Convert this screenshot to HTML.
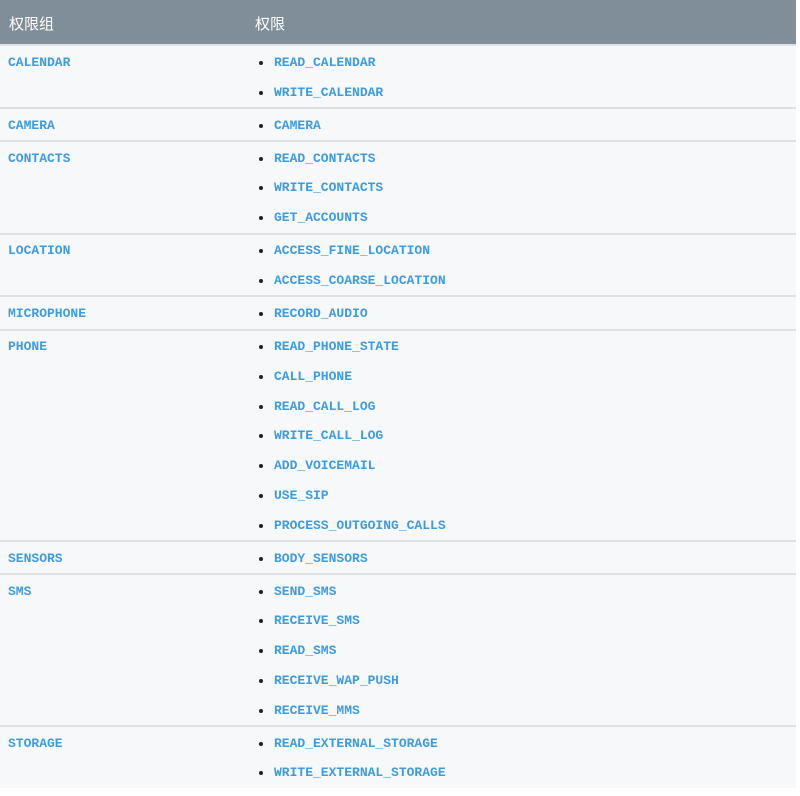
<!DOCTYPE html>
<html><head><meta charset="utf-8"><style>
body{margin:0;background:#fff;width:800px;height:796px;overflow:hidden}
.t{position:absolute;left:0;top:0;width:796px;background:#f7f8fa}
.h{height:44.3px;background:#7f8e99;color:#fff;font:15px "Liberation Sans","Noto Sans CJK SC",sans-serif;position:relative}
.h span{position:absolute;top:13px}
.r{border-top:2px solid #dfe2e5;position:relative;padding-bottom:1.3px}
.g{position:absolute;left:8px;top:8.5px}
.g,.i{font:bold 13px "Liberation Mono",monospace;color:#3d9be0;line-height:29.75px}
.g{line-height:16px}
.l{margin-left:274px;position:relative;top:1.5px}
.i{position:relative;height:29.75px}
.i:before{content:"";position:absolute;left:-15px;top:13px;width:4px;height:4px;border-radius:2px;background:#222}
</style></head><body><div class="t">
<div class="h"><span style="left:9px">权限组</span><span style="left:255px">权限</span></div>
<div class="r"><div class="g">CALENDAR</div><div class="l"><div class="i">READ_CALENDAR</div><div class="i">WRITE_CALENDAR</div></div></div>
<div class="r"><div class="g">CAMERA</div><div class="l"><div class="i">CAMERA</div></div></div>
<div class="r"><div class="g">CONTACTS</div><div class="l"><div class="i">READ_CONTACTS</div><div class="i">WRITE_CONTACTS</div><div class="i">GET_ACCOUNTS</div></div></div>
<div class="r"><div class="g">LOCATION</div><div class="l"><div class="i">ACCESS_FINE_LOCATION</div><div class="i">ACCESS_COARSE_LOCATION</div></div></div>
<div class="r"><div class="g">MICROPHONE</div><div class="l"><div class="i">RECORD_AUDIO</div></div></div>
<div class="r"><div class="g">PHONE</div><div class="l"><div class="i">READ_PHONE_STATE</div><div class="i">CALL_PHONE</div><div class="i">READ_CALL_LOG</div><div class="i">WRITE_CALL_LOG</div><div class="i">ADD_VOICEMAIL</div><div class="i">USE_SIP</div><div class="i">PROCESS_OUTGOING_CALLS</div></div></div>
<div class="r"><div class="g">SENSORS</div><div class="l"><div class="i">BODY_SENSORS</div></div></div>
<div class="r"><div class="g">SMS</div><div class="l"><div class="i">SEND_SMS</div><div class="i">RECEIVE_SMS</div><div class="i">READ_SMS</div><div class="i">RECEIVE_WAP_PUSH</div><div class="i">RECEIVE_MMS</div></div></div>
<div class="r"><div class="g">STORAGE</div><div class="l"><div class="i">READ_EXTERNAL_STORAGE</div><div class="i">WRITE_EXTERNAL_STORAGE</div></div></div>
</div></body></html>
